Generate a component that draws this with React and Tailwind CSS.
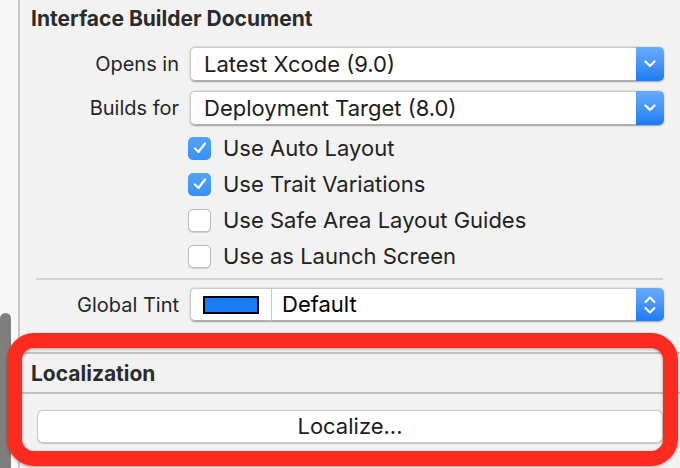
import React from "react";

const font = { fontFamily: "Inter, 'Noto Sans', 'Liberation Sans', sans-serif" };

function Chevron() {
  return (
    <svg width="12" height="8" viewBox="0 0 12 8" fill="none">
      <path d="M1.5 1.5 L6 6 L10.5 1.5" stroke="white" strokeWidth="2.2" strokeLinecap="round" strokeLinejoin="round" />
    </svg>
  );
}

function UpDown() {
  return (
    <svg width="12" height="20" viewBox="0 0 12 20" fill="none">
      <path d="M1.5 7 L6 2.5 L10.5 7" stroke="white" strokeWidth="2" strokeLinecap="round" strokeLinejoin="round" />
      <path d="M1.5 13 L6 17.5 L10.5 13" stroke="white" strokeWidth="2" strokeLinecap="round" strokeLinejoin="round" />
    </svg>
  );
}

function Popup({ text }) {
  return (
    <div className="flex h-[34px] w-[474px] rounded-[5px] shadow-[0_0.5px_1.5px_rgba(0,0,0,0.35)]">
      <div className="flex flex-1 items-center rounded-l-[5px] border border-r-0 border-[#c9c9c9] border-b-[#b0b0b0] bg-white pl-[13px] text-[22px] text-[#1c1c1c]">
        {text}
      </div>
      <div className="flex w-[28px] items-center justify-center rounded-r-[5px] bg-gradient-to-b from-[#68acfb] to-[#1a7cf6]">
        <Chevron />
      </div>
    </div>
  );
}

function Check({ checked, label }) {
  return (
    <div className="flex h-[36px] items-center pl-[168px]">
      {checked ? (
        <div className="flex h-[23px] w-[23px] items-center justify-center rounded-[5px] bg-gradient-to-b from-[#53a3fb] to-[#3590f7]">
          <svg width="14" height="12" viewBox="0 0 14 12" fill="none">
            <path d="M2 6.5 L5.5 10 L12 1.5" stroke="white" strokeWidth="2.2" strokeLinecap="round" strokeLinejoin="round" />
          </svg>
        </div>
      ) : (
        <div className="h-[23px] w-[23px] rounded-[5px] border border-[#bdbdbd] bg-white shadow-[0_0.5px_1px_rgba(0,0,0,0.15)]" />
      )}
      <span className="ml-[12px] text-[22px] text-[#222]">{label}</span>
    </div>
  );
}

export default function App() {
  return (
    <div className="relative flex h-[468px] w-[680px] overflow-hidden bg-[#f7f7f7]" style={font}>
      <div className="flex w-[18px] flex-col">
        <div className="h-[313px]" />
        <div className="w-[11px] flex-1 rounded-t-[6px] bg-[#7e7e7e]" />
      </div>
      <div className="w-[2px] bg-[#c8c8c8]" />
      <div className="flex flex-1 flex-col bg-[#f2f2f2]">
        <div className="flex h-[37px] items-center pl-[11px] text-[21px] font-bold text-[#2b2b2b]">
          Interface Builder Document
        </div>
        <div className="mt-[10px] flex h-[34px] items-center">
          <div className="w-[159px] text-right text-[20px] text-[#262626]">Opens in</div>
          <div className="ml-[11px]"><Popup text="Latest Xcode (9.0)" /></div>
        </div>
        <div className="mt-[10px] flex h-[34px] items-center">
          <div className="w-[159px] text-right text-[20px] text-[#262626]">Builds for</div>
          <div className="ml-[11px]"><Popup text="Deployment Target (8.0)" /></div>
        </div>
        <div className="mt-[5px]">
          <Check checked label="Use Auto Layout" />
          <Check checked label="Use Trait Variations" />
          <Check label="Use Safe Area Layout Guides" />
          <Check label="Use as Launch Screen" />
        </div>
        <div className="ml-[16px] mt-[4px] h-[2px] w-[627px] bg-[#d2d2d2]" />
        <div className="mt-[8px] flex h-[33px] items-center">
          <div className="w-[159px] text-right text-[20px] text-[#262626]">Global Tint</div>
          <div className="ml-[11px] flex h-[33px] w-[474px] rounded-[5px] shadow-[0_0.5px_1.5px_rgba(0,0,0,0.35)]">
            <div className="flex w-[81px] items-center justify-center rounded-l-[5px] border border-r-0 border-[#c9c9c9] border-b-[#b0b0b0] bg-white">
              <div className="h-[18px] w-[56px] border-2 border-black bg-[#1a7cf5]" />
            </div>
            <div className="w-px bg-[#c9c9c9]" />
            <div className="flex flex-1 items-center border border-x-0 border-[#c9c9c9] border-b-[#b0b0b0] bg-white pl-[10px] text-[22px] text-black">
              Default
            </div>
            <div className="flex w-[28px] items-center justify-center rounded-r-[5px] bg-gradient-to-b from-[#68acfb] to-[#1a7cf6]">
              <UpDown />
            </div>
          </div>
        </div>
        <div className="mt-[31px] h-[2px] bg-[#c2c2c2]" />
        <div className="flex h-[38px] items-center pl-[11px] pt-[2px] text-[21px] font-bold text-[#2b2b2b]">
          Localization
        </div>
        <div className="h-[2px] bg-[#bebebe]" />
        <div className="ml-[17px] mt-[16px] flex h-[33px] w-[626px] items-center justify-center rounded-[6px] border border-[#cbcbcb] bg-white text-[22px] text-[#1c1c1c] shadow-[0_0.5px_1px_rgba(0,0,0,0.2)]">
          Localize...
        </div>
      </div>
      <div className="pointer-events-none absolute left-[7px] top-[333px] h-[133px] w-[671px] rounded-[27px] border-[15px] border-[#fd2b1f] shadow-[0_1px_3px_rgba(0,0,0,0.35),inset_0_1px_3px_rgba(0,0,0,0.35)]" />
    </div>
  );
}
